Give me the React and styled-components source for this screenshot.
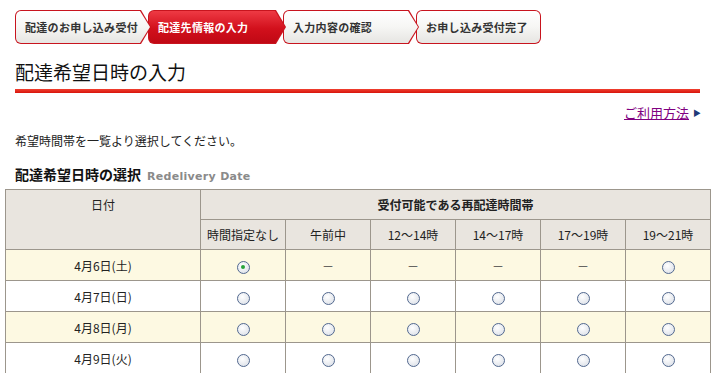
import React from "react";
import styled, { createGlobalStyle, css } from "styled-components";

const GlobalStyle = createGlobalStyle`
  body {
    margin: 0;
    background: #fff;
    font-family: "Noto Sans CJK JP", "Noto Sans", sans-serif;
    color: #222;
  }
`;

const steps = [
  { label: "配達のお申し込み受付", width: 136 },
  { label: "配達先情報の入力", width: 138, active: true },
  { label: "入力内容の確認", width: 136 },
  { label: "お申し込み受付完了", width: 125, last: true },
];

const times = ["時間指定なし", "午前中", "12～14時", "14～17時", "17～19時", "19～21時"];

const rows = [
  { date: "4月6日(土)", cells: ["checked", "-", "-", "-", "-", "radio"], cream: true },
  { date: "4月7日(日)", cells: ["radio", "radio", "radio", "radio", "radio", "radio"] },
  { date: "4月8日(月)", cells: ["radio", "radio", "radio", "radio", "radio", "radio"], cream: true },
  { date: "4月9日(火)", cells: ["radio", "radio", "radio", "radio", "radio", "radio"] },
];

export default function App() {
  return (
    <>
      <GlobalStyle />
      <Page>
        <StepBar>
          {steps.map((s, i) => (
            <Step key={s.label} $width={s.width} $last={s.last} $z={10 - i}>
              <StepInner $active={s.active} $last={s.last}>
                {s.label}
              </StepInner>
            </Step>
          ))}
        </StepBar>

        <Title>配達希望日時の入力</Title>
        <RedRule />

        <HelpRow>
          <HelpLink href="#">ご利用方法</HelpLink>
          <HelpArrow>▶</HelpArrow>
        </HelpRow>

        <Lead>希望時間帯を一覧より選択してください。</Lead>

        <SectionHead>
          配達希望日時の選択<SubHead>Redelivery Date</SubHead>
        </SectionHead>

        <Table>
          <colgroup>
            <col style={{ width: 195 }} />
            {times.map(t => (
              <col key={t} style={{ width: 85 }} />
            ))}
          </colgroup>
          <thead>
            <HeadRow>
              <Th rowSpan={2} $top>
                日付
              </Th>
              <Th colSpan={6} $bold>
                受付可能である再配達時間帯
              </Th>
            </HeadRow>
            <HeadRow>
              {times.map(t => (
                <Th key={t}>{t}</Th>
              ))}
            </HeadRow>
          </thead>
          <tbody>
            {rows.map(r => (
              <BodyRow key={r.date} $cream={r.cream}>
                <Td>{r.date}</Td>
                {r.cells.map((c, i) => (
                  <Td key={i}>
                    {c === "-" ? <Dash>－</Dash> : <Radio $checked={c === "checked"} />}
                  </Td>
                ))}
              </BodyRow>
            ))}
          </tbody>
        </Table>
      </Page>
    </>
  );
}

const Page = styled.div`
  width: 721px;
  padding-top: 10px;
`;

const StepBar = styled.div`
  display: flex;
  padding-left: 15px;
  height: 34px;
`;

const arrowClip = css`
  clip-path: polygon(0 0, calc(100% - 10px) 0, 100% 50%, calc(100% - 10px) 100%, 0 100%);
`;

const Step = styled.div`
  position: relative;
  z-index: ${p => p.$z};
  flex: none;
  width: ${p => p.$width}px;
  margin-right: -3px;
  padding: 1px;
  box-sizing: border-box;
  background: #c8141e;
  border-radius: 6px;
  ${p => !p.$last && arrowClip}
`;

const StepInner = styled.div`
  height: 100%;
  display: flex;
  align-items: center;
  padding-left: 9px;
  border-radius: 5px;
  font-size: 11px;
  letter-spacing: 0.3px;
  font-weight: bold;
  white-space: nowrap;
  color: ${p => (p.$active ? "#fff" : "#333")};
  background: ${p =>
    p.$active
      ? "linear-gradient(#ee3a44, #d2101c 55%, #c00814)"
      : "linear-gradient(#ffffff, #f6f6f4 50%, #e6e5e2)"};
  ${p => !p.$last && arrowClip}
`;

const Title = styled.h1`
  margin: 16px 0 0 15px;
  font-size: 19px;
  line-height: 24px;
  font-weight: normal;
  color: #111;
`;

const RedRule = styled.div`
  margin: 5px 21px 0 15px;
  height: 4px;
  background: linear-gradient(#f04030, #d8140c);
`;

const HelpRow = styled.div`
  display: flex;
  justify-content: flex-end;
  align-items: center;
  gap: 4px;
  margin: 11px 20px 0 0;
  height: 16px;
`;

const HelpLink = styled.a`
  font-size: 13px;
  color: #800080;
  text-decoration: underline;
`;

const HelpArrow = styled.span`
  font-size: 8px;
  color: #1f3a78;
`;

const Lead = styled.p`
  margin: 13px 0 0 15px;
  font-size: 12px;
  line-height: 16px;
`;

const SectionHead = styled.h2`
  margin: 15px 0 0 15px;
  font-size: 14px;
  line-height: 20px;
  height: 20px;
  font-weight: bold;
  color: #111;
`;

const SubHead = styled.span`
  margin-left: 6px;
  font-family: "DejaVu Sans", sans-serif;
  font-size: 11px;
  font-weight: bold;
  color: #8a8a8a;
  letter-spacing: 0.3px;
`;

const Table = styled.table`
  margin: 5px 0 0 5px;
  width: 705px;
  table-layout: fixed;
  border-collapse: collapse;
  font-size: 12px;
`;

const HeadRow = styled.tr`
  height: 30px;
  background: #e9e5df;
`;

const Th = styled.th`
  padding: ${p => (p.$top ? "6px 0 0" : "0")};
  border: 1px solid #9c968c;
  font-weight: ${p => (p.$bold ? "bold" : "normal")};
  vertical-align: ${p => (p.$top ? "top" : "middle")};
  color: #222;
  text-align: center;
`;

const BodyRow = styled.tr`
  height: 31px;
  background: ${p => (p.$cream ? "#fdf9e2" : "#fff")};
`;

const Td = styled.td`
  padding: 0;
  border: 1px solid #9c968c;
  text-align: center;
  vertical-align: middle;
`;

const Dash = styled.span`
  color: #444;
`;

const Radio = styled.span`
  position: relative;
  display: inline-block;
  vertical-align: middle;
  width: 11px;
  height: 11px;
  border: 1px solid #53698f;
  border-radius: 50%;
  background: radial-gradient(circle at 40% 35%, #ffffff, #dfe3ea 80%);
  &::after {
    content: "";
    display: ${p => (p.$checked ? "block" : "none")};
    position: absolute;
    left: 3.5px;
    top: 3.5px;
    width: 4px;
    height: 4px;
    border-radius: 50%;
    background: #27a33a;
  }
`;
